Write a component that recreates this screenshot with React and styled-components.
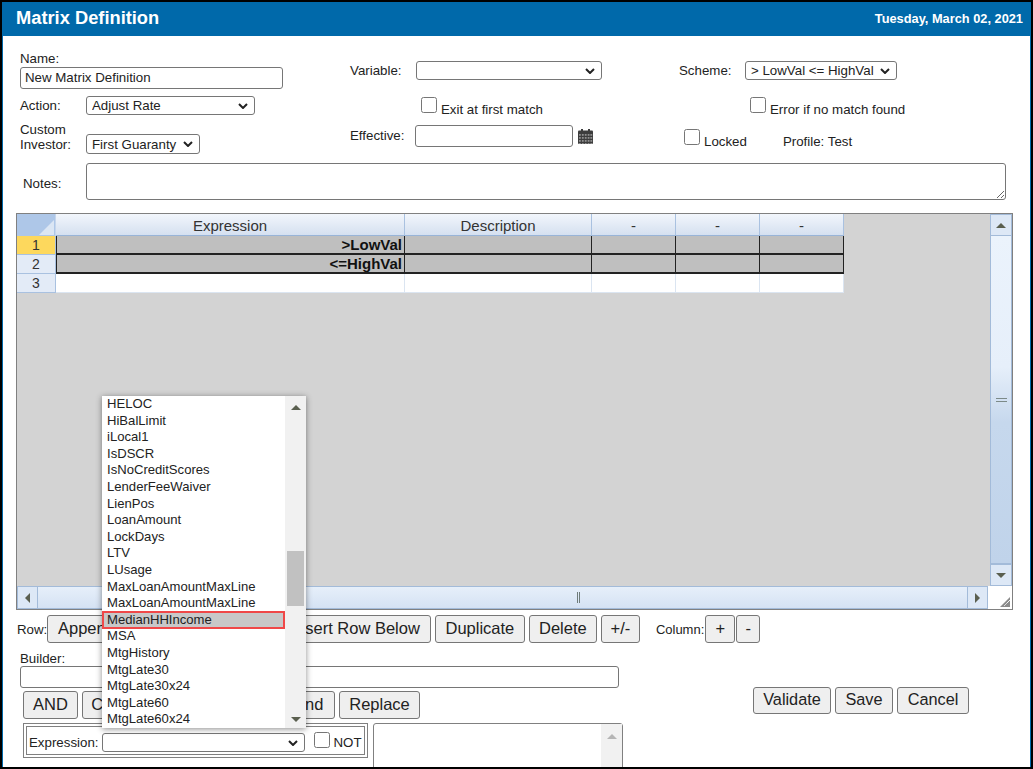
import React from "react";
import styled, { createGlobalStyle } from "styled-components";

const VARIABLES = [
  "HELOC", "HiBalLimit", "iLocal1", "IsDSCR", "IsNoCreditScores", "LenderFeeWaiver",
  "LienPos", "LoanAmount", "LockDays", "LTV", "LUsage", "MaxLoanAmountMaxLine",
  "MaxLoanAmountMaxLine", "MedianHHIncome", "MSA", "MtgHistory", "MtgLate30",
  "MtgLate30x24", "MtgLate60", "MtgLate60x24",
];

const COLUMNS = [
  { title: "Expression", width: 349 },
  { title: "Description", width: 187 },
  { title: "-", width: 84 },
  { title: "-", width: 84 },
  { title: "-", width: 84 },
];

const ROWS = [
  { id: 1, value: ">LowVal", marked: true, active: true },
  { id: 2, value: "<=HighVal", marked: true },
  { id: 3, value: "" },
];

const CHEVRON =
  "data:image/svg+xml,%3Csvg xmlns='http://www.w3.org/2000/svg' width='10' height='6'%3E%3Cpath d='M1 1 L5 5 L9 1' fill='none' stroke='%23222' stroke-width='2'/%3E%3C/svg%3E";

const App = () => (
  <>
    <GlobalStyle />
    <Frame>
      <Header>
        <Title>Matrix Definition</Title>
        <HeaderDate>Tuesday, March 02, 2021</HeaderDate>
      </Header>

      <Form>
        <TopFields>
          <LeftFields>
            <NameLabel>Name:</NameLabel>
            <NameInput defaultValue="New Matrix Definition" />
            <FieldRow $top={7}>
              <FieldLabel $width={66}>Action:</FieldLabel>
              <Select $width={169} defaultValue="Adjust Rate">
                <option>Adjust Rate</option>
              </Select>
            </FieldRow>
            <InvestorRow>
              <InvestorLabel>Custom<br />Investor:</InvestorLabel>
              <InvestorSelect $width={114} defaultValue="First Guaranty">
                <option>First Guaranty</option>
              </InvestorSelect>
            </InvestorRow>
          </LeftFields>

          <MiddleFields>
            <FieldRow>
              <FieldLabel $width={66}>Variable:</FieldLabel>
              <Select $width={186}><option></option></Select>
            </FieldRow>
            <CheckRow $indent={71} $top={17}>
              <Check />
              <CheckText>Exit at first match</CheckText>
            </CheckRow>
            <FieldRow $top={12}>
              <EffectiveLabel>Effective:</EffectiveLabel>
              <DateInput />
              <CalendarIcon />
            </FieldRow>
          </MiddleFields>

          <RightFields>
            <FieldRow>
              <FieldLabel $width={66}>Scheme:</FieldLabel>
              <Select $width={152} defaultValue="> LowVal <= HighVal">
                <option>{"> LowVal <= HighVal"}</option>
              </Select>
            </FieldRow>
            <CheckRow $indent={71} $top={17}>
              <Check />
              <CheckText>Error if no match found</CheckText>
            </CheckRow>
            <CheckRow $indent={5} $top={16}>
              <Check />
              <CheckText>Locked</CheckText>
              <ProfileText>Profile: Test</ProfileText>
            </CheckRow>
          </RightFields>
        </TopFields>

        <NotesRow>
          <NotesLabel>Notes:</NotesLabel>
          <Notes />
        </NotesRow>

        <Sheet>
          <SheetMain>
            <SheetCanvas>
              <HeadRow>
                <CornerCell />
                {COLUMNS.map((c, i) => (
                  <HeadCell key={i} $width={c.width}>{c.title}</HeadCell>
                ))}
              </HeadRow>
              {ROWS.map((r) => (
                <DataRow key={r.id}>
                  <RowNumber $active={r.active}>{r.id}</RowNumber>
                  {COLUMNS.map((c, i) => (
                    <DataCell key={i} $width={c.width} $marked={r.marked} $first={i === 0}>
                      {i === 0 ? r.value : ""}
                    </DataCell>
                  ))}
                </DataRow>
              ))}
            </SheetCanvas>
            <VerticalBar>
              <BarButton $height={22}><Arrow $dir="up" /></BarButton>
              <VerticalThumb><Grip /></VerticalThumb>
              <BarButton $height={22}><Arrow $dir="down" /></BarButton>
            </VerticalBar>
          </SheetMain>
          <SheetFoot>
            <HorizontalBar>
              <BarButton $width={21}><Arrow $dir="left" /></BarButton>
              <HorizontalThumb><GripVertical /></HorizontalThumb>
              <BarButton $width={21}><Arrow $dir="right" /></BarButton>
            </HorizontalBar>
            <SheetCorner>
              <svg width="12" height="12" viewBox="0 0 12 12">
                <path d="M11 1 L1 11 H11 Z" fill="#8c8c8c" />
                <path d="M8 7 L11 4 M5 10 L11 4" stroke="#fff" strokeWidth="0.7" />
              </svg>
            </SheetCorner>
          </SheetFoot>
        </Sheet>

        <ActionRow>
          <SmallLabel>Row:</SmallLabel>
          <Button>Append Row</Button>
          <Button $width={109}>Insert Above</Button>
          <Button>Insert Row Below</Button>
          <Button $width={90}>Duplicate</Button>
          <Button $width={68}>Delete</Button>
          <Button $width={39}>+/-</Button>
          <ColumnLabel>Column:</ColumnLabel>
          <TightButtons>
            <Button $width={30}>+</Button>
            <Button $width={24}>-</Button>
          </TightButtons>
        </ActionRow>

        <BuilderArea>
          <BuilderMain>
            <BuilderLabel>Builder:</BuilderLabel>
            <BuilderInput />
            <BuilderButtons>
              <Button $width={55}>AND</Button>
              <Button $width={58}>Clear</Button>
              <Button $width={107}>Remove</Button>
              <Button $width={80}>Append</Button>
              <Button $width={81}>Replace</Button>
            </BuilderButtons>
            <ExpressionArea>
              <ExpressionOuter>
                <ExpressionInner>
                  <span>Expression:</span>
                  <ExpressionSelect $width={203}><option></option></ExpressionSelect>
                  <NotCheck />
                  <span>NOT</span>
                </ExpressionInner>
              </ExpressionOuter>
              <ExpressionList>
                <ListBar><Arrow $dir="up" $light /></ListBar>
              </ExpressionList>
            </ExpressionArea>
          </BuilderMain>
          <SaveButtons>
            <SaveButton $width={78}>Validate</SaveButton>
            <SaveButton $width={58}>Save</SaveButton>
            <SaveButton $width={72}>Cancel</SaveButton>
          </SaveButtons>
        </BuilderArea>

        <VariableMenu>
          <MenuItems>
            {VARIABLES.map((v, i) => (
              <MenuItem key={i} $selected={v === "MedianHHIncome"}>{v}</MenuItem>
            ))}
          </MenuItems>
          <MenuBar>
            <Arrow $dir="up" />
            <MenuThumb />
            <MenuArrowDown><Arrow $dir="down" /></MenuArrowDown>
          </MenuBar>
        </VariableMenu>
      </Form>
    </Frame>
  </>
);

const CalendarIcon = () => (
  <CalendarSvg width="15" height="15" viewBox="0 0 15 15">
    <rect x="0" y="1.5" width="15" height="13.5" rx="1" fill="#3d3d3d" />
    <rect x="3" y="0" width="2" height="3.5" fill="#3d3d3d" />
    <rect x="10" y="0" width="2" height="3.5" fill="#3d3d3d" />
    <g fill="#8f8f8f">
      {[1, 4, 7, 10].map((y) =>
        [1, 3.9, 6.8, 9.7, 12.4].map((x) => (
          <rect key={`${x}-${y}`} x={x} y={y + 4} width="1.8" height="1.8" />
        ))
      )}
    </g>
  </CalendarSvg>
);

// ── Styled ──

const GlobalStyle = createGlobalStyle`
  html, body {
    margin: 0;
    height: 769px;
    overflow: hidden;
    background: #fff;
  }
  body {
    font-family: "Liberation Sans", Arial, sans-serif;
    font-size: 13.3px;
    color: #222;
  }
`;

const Frame = styled.div`
  box-sizing: border-box;
  width: 1033px;
  height: 769px;
  overflow: hidden;
  position: relative;
  background: #fff;
  border: 2px solid #000;
  box-shadow: inset 1px 0 #0069aa, inset -1px 0 #0069aa;
`;

const Header = styled.header`
  height: 34px;
  background: #0069aa;
  color: #fff;
  display: flex;
  align-items: center;
  justify-content: space-between;
  padding: 0 8px 2px 14px;
  box-sizing: border-box;
`;

const Title = styled.h1`
  margin: 0;
  font-size: 18.3px;
  font-weight: 700;
`;

const HeaderDate = styled.div`
  font-size: 12.8px;
  font-weight: 700;
`;

const Form = styled.div`
  position: relative;
  padding: 0 0 0 14px;
`;

const TopFields = styled.div`
  display: flex;
  height: 127px;
`;

const LeftFields = styled.div`
  width: 334px;
  padding: 17px 0 0 4px;
  box-sizing: border-box;
`;

const MiddleFields = styled.div`
  width: 329px;
  padding-top: 25px;
  box-sizing: border-box;
`;

const RightFields = styled.div`
  padding-top: 25px;
`;

const NameLabel = styled.div`
  line-height: 14px;
  margin-top: -1px;
  margin-bottom: 1px;
`;

const controlBase = `
  box-sizing: border-box;
  font-family: "Liberation Sans", Arial, sans-serif;
  font-size: 13.3px;
  color: #222;
  background: #fff;
  border: 1px solid #767676;
  border-radius: 3px;
  margin: 0;
`;

const NameInput = styled.input`
  ${controlBase}
  display: block;
  width: 263px;
  height: 22px;
  padding: 0 4px 2px;
`;

const FieldRow = styled.div`
  display: flex;
  align-items: center;
  margin-top: ${(p) => p.$top || 0}px;
`;

const FieldLabel = styled.label`
  width: ${(p) => p.$width}px;
  flex: none;
`;

const EffectiveLabel = styled.label`
  width: 65px;
  flex: none;
  padding-bottom: 2px;
`;

const InvestorRow = styled.div`
  display: flex;
  align-items: flex-start;
  margin-top: 7px;
`;

const InvestorLabel = styled.label`
  width: 66px;
  line-height: 15px;
  flex: none;
`;

const Select = styled.select`
  ${controlBase}
  width: ${(p) => p.$width}px;
  height: 19px;
  padding: 0 16px 0 5px;
  appearance: none;
  background: #fff url("${CHEVRON}") no-repeat right 6px center;
`;

const InvestorSelect = styled(Select)`
  height: 20px;
  margin-top: 12px;
`;

const ExpressionSelect = styled(Select)`
  margin-left: 2px;
`;

const DateInput = styled.input`
  ${controlBase}
  width: 158px;
  height: 22px;
`;

const CalendarSvg = styled.svg`
  margin-left: 5px;
  flex: none;
`;

const CheckRow = styled.div`
  display: flex;
  align-items: flex-end;
  height: 16px;
  padding-left: ${(p) => p.$indent}px;
  margin-top: ${(p) => p.$top}px;
  line-height: 14px;
`;

const Check = styled.input.attrs({ type: "checkbox" })`
  width: 16px;
  height: 16px;
  flex: none;
  margin: 0 4px 0 0;
`;

const CheckText = styled.span`
  margin-bottom: -4px;
`;

const ProfileText = styled(CheckText)`
  margin-left: 36px;
`;

const NotesRow = styled.div`
  display: flex;
  align-items: center;
`;

const NotesLabel = styled.label`
  width: 63px;
  padding: 4px 0 0 7px;
  flex: none;
`;

const Notes = styled.textarea`
  ${controlBase}
  width: 920px;
  height: 37px;
`;

const Sheet = styled.div`
  box-sizing: border-box;
  width: 997px;
  height: 397px;
  margin-top: 13px;
  border: 1px solid #808080;
  background: #d3d3d3;
  display: flex;
  flex-direction: column;
`;

const SheetMain = styled.div`
  display: flex;
  height: 372px;
`;

const SheetCanvas = styled.div`
  flex: 1;
`;

const HeadRow = styled.div`
  display: flex;
  height: 22px;
`;

const CornerCell = styled.div`
  position: relative;
  box-sizing: border-box;
  width: 39px;
  flex: none;
  background: #aec7e8;
  border-right: 1px solid #c6d6ec;
  &::after {
    content: "";
    position: absolute;
    right: 1px;
    bottom: 1px;
    border-style: solid;
    border-width: 0 0 15px 15px;
    border-color: transparent transparent #dbe6f4 transparent;
  }
`;

const HeadCell = styled.div`
  box-sizing: border-box;
  width: ${(p) => p.$width}px;
  flex: none;
  text-align: center;
  font-size: 15px;
  line-height: 23px;
  color: #333;
  background: linear-gradient(#f2f6fc, #d5e0f0);
  border-right: 1px solid #a9c1e0;
  border-bottom: 1px solid #98b4d8;
`;

const DataRow = styled.div`
  display: flex;
  height: 19px;
`;

const RowNumber = styled.div`
  box-sizing: border-box;
  width: 39px;
  flex: none;
  text-align: center;
  font-size: 14px;
  line-height: 18px;
  color: #333;
  background: ${(p) => (p.$active ? "#fdd85d" : "#e3ebf7")};
  border-right: 1px solid #a9c1e0;
  border-bottom: 1px solid #a9c1e0;
`;

const DataCell = styled.div`
  box-sizing: border-box;
  width: ${(p) => p.$width}px;
  flex: none;
  text-align: right;
  font-size: 15px;
  font-weight: 700;
  line-height: 18px;
  padding-right: 2px;
  color: #111;
  background: ${(p) => (p.$marked ? "#bfbfbf" : "#fff")};
  border-right: 1px solid ${(p) => (p.$marked ? "#222" : "#dbe5f1")};
  border-bottom: ${(p) => (p.$marked ? "2px solid #222" : "1px solid #dbe5f1")};
  border-left: ${(p) => (p.$marked && p.$first ? "1px solid #222" : "none")};
`;

const VerticalBar = styled.div`
  width: 22px;
  flex: none;
  display: flex;
  flex-direction: column;
`;

const BarButton = styled.div`
  box-sizing: border-box;
  height: ${(p) => (p.$height ? `${p.$height}px` : "auto")};
  width: ${(p) => (p.$width ? `${p.$width}px` : "auto")};
  flex: none;
  display: flex;
  align-items: center;
  justify-content: center;
  background: #dde8f6;
  border: 1px solid #a3bbd9;
`;

const VerticalThumb = styled.div`
  flex: 1;
  box-sizing: border-box;
  display: flex;
  align-items: center;
  justify-content: center;
  background: linear-gradient(#ebf3fc 0%, #e6effa 40%, #c6d8ed 57%, #c0d3ea 100%);
  border: 1px solid #a3bbd9;
  border-top: none;
`;

const Grip = styled.div`
  width: 11px;
  height: 2px;
  border-top: 1px solid #7c8a88;
  border-bottom: 1px solid #7c8a88;
`;

const GripVertical = styled.div`
  width: 1px;
  height: 11px;
  border-left: 1px solid #6f7c7a;
  border-right: 1px solid #6f7c7a;
`;

const Arrow = styled.span`
  width: 0;
  height: 0;
  flex: none;
  border-style: solid;
  border-color: transparent;
  ${(p) => {
    const c = p.$light ? "#b5b5b5" : "#5a5f4f";
    if (p.$dir === "up") return `border-width: 0 5px 5px; border-bottom-color: ${c};`;
    if (p.$dir === "down") return `border-width: 5px 5px 0; border-top-color: ${c};`;
    if (p.$dir === "left") return `border-width: 5px 5px 5px 0; border-right-color: ${c};`;
    return `border-width: 5px 0 5px 5px; border-left-color: ${c};`;
  }}
`;

const SheetFoot = styled.div`
  display: flex;
  flex: 1;
  background: #fff;
`;

const HorizontalBar = styled.div`
  flex: 1;
  display: flex;
  margin-right: 2px;
`;

const HorizontalThumb = styled.div`
  flex: 1;
  display: flex;
  align-items: center;
  justify-content: center;
  padding-left: 152px;
  background: linear-gradient(#e6effa, #d5e2f3);
  border-top: 1px solid #a3bbd9;
  border-bottom: 1px solid #a3bbd9;
`;

const SheetCorner = styled.div`
  width: 22px;
  flex: none;
  display: flex;
  align-items: flex-end;
  justify-content: flex-end;
  padding: 0 1px 1px 0;
  box-sizing: border-box;
`;

const ActionRow = styled.div`
  display: flex;
  align-items: center;
  gap: 4px;
  margin-top: 5px;
  height: 28px;
`;

const SmallLabel = styled.span`
  width: 27px;
  flex: none;
  padding-left: 1px;
  box-sizing: border-box;
  white-space: nowrap;
`;

const ColumnLabel = styled.span`
  font-size: 13px;
  margin-left: 12px;
  margin-right: -3px;
`;

const Button = styled.button`
  box-sizing: border-box;
  height: 28px;
  width: ${(p) => (p.$width ? `${p.$width}px` : "auto")};
  padding: ${(p) => (p.$width ? "0 0 1px" : "0 10px 1px")};
  margin: 0;
  flex: none;
  font-family: "Liberation Sans", Arial, sans-serif;
  font-size: 16.5px;
  color: #222;
  background: #efefef;
  border: 1px solid #767676;
  border-radius: 3px;
`;

const TightButtons = styled.div`
  display: flex;
  gap: 1px;
`;

const BuilderArea = styled.div`
  display: flex;
`;

const BuilderMain = styled.div`
  width: 737px;
  flex: none;
`;

const BuilderLabel = styled.div`
  line-height: 14px;
  padding-left: 4px;
  margin-top: 9px;
`;

const BuilderInput = styled.input`
  ${controlBase}
  display: block;
  width: 599px;
  height: 22px;
  margin-left: 4px;
`;

const BuilderButtons = styled.div`
  display: flex;
  gap: 4px;
  padding-left: 7px;
  margin-top: 3px;
`;

const ExpressionArea = styled.div`
  display: flex;
  gap: 5px;
  margin-top: 4px;
  padding-left: 7px;
`;

const ExpressionOuter = styled.div`
  box-sizing: border-box;
  width: 345px;
  height: 35px;
  padding: 2px;
  border: 1px solid #808080;
`;

const ExpressionInner = styled.div`
  box-sizing: border-box;
  height: 29px;
  border: 1px solid #808080;
  display: flex;
  align-items: center;
  padding: 4px 0 0 2px;
  gap: 2px;
`;

const NotCheck = styled(Check)`
  margin: -6px 1px 0 7px;
`;

const ExpressionList = styled.div`
  box-sizing: border-box;
  width: 250px;
  height: 60px;
  border: 1px solid #808080;
  border-radius: 3px 3px 0 0;
  display: flex;
  justify-content: flex-end;
`;

const ListBar = styled.div`
  width: 21px;
  background: #f1f1f1;
  display: flex;
  justify-content: center;
  padding-top: 10px;
  box-sizing: border-box;
`;

const SaveButtons = styled.div`
  display: flex;
  gap: 4px;
  margin-top: 44px;
  height: 27px;
`;

const SaveButton = styled(Button)`
  height: 27px;
  font-size: 16.3px;
  padding-bottom: 2px;
`;

const VariableMenu = styled.div`
  position: absolute;
  left: 100px;
  top: 360px;
  width: 204px;
  height: 332px;
  background: #fff;
  display: flex;
  overflow: hidden;
  box-shadow: 0 1px 6px rgba(0, 0, 0, 0.45);
`;

const MenuItems = styled.div`
  flex: 1;
`;

const MenuItem = styled.div`
  box-sizing: border-box;
  height: 16.6px;
  line-height: 16.6px;
  padding-left: 5px;
  font-size: 13.1px;
  white-space: nowrap;
  ${(p) =>
    p.$selected &&
    `
    background: #c8c8c8;
    box-shadow: inset 0 0 0 2px #f04848;
    height: 18.6px;
    line-height: 18.6px;
    margin: -1px 0;
  `}
`;

const MenuBar = styled.div`
  width: 21px;
  flex: none;
  background: #f1f1f1;
  display: flex;
  flex-direction: column;
  align-items: center;
  padding-top: 9px;
  box-sizing: border-box;
  position: relative;
`;

const MenuThumb = styled.div`
  width: 17px;
  height: 55px;
  margin-top: 141px;
  background: #c1c1c1;
`;

const MenuArrowDown = styled.div`
  position: absolute;
  bottom: 6px;
  display: flex;
`;

export default App;
